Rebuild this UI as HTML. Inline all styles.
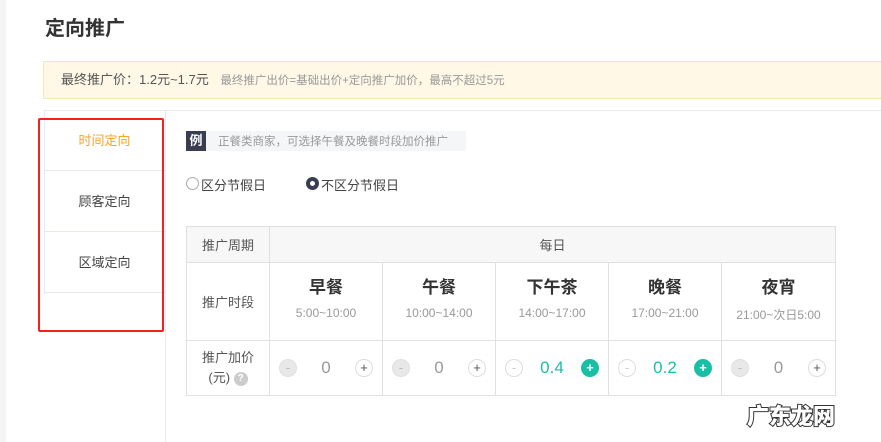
<!DOCTYPE html>
<html><head><meta charset="utf-8"><style>
*{margin:0;padding:0;box-sizing:border-box}
body{width:881px;height:442px;overflow:hidden;background:#fff;font-family:"Liberation Sans","Noto Sans CJK SC",sans-serif;position:relative;color:#333}
.abs{position:absolute}
table{border-collapse:collapse;position:absolute;left:186px;top:226px;width:650px;font-size:13px;color:#555}
td{border:1px solid #e0e0e0;text-align:center}
.btn{display:inline-block;width:18px;height:18px;border-radius:50%;font-size:13px;line-height:16px;text-align:center;vertical-align:middle}
.m{background:#e8e8e8;color:#bbb;border:1px solid #e0e0e0}
.mw{background:#fff;color:#ccc;border:1px solid #ddd}
.p{background:#fff;color:#555;border:1px solid #ddd}
.pg{background:#19bfa5;color:#fff;border:1px solid #19bfa5;font-weight:bold}
.cell{display:flex;justify-content:space-between;align-items:center;padding:0 9px}
.v{font-size:17px;color:#999}
.vg{font-size:17px;color:#19bfa5}
.tt{vertical-align:top;padding-top:10px}
.nm{font-size:17px;font-weight:bold;color:#333}
.tm{font-size:12px;color:#999;margin-top:8px}
</style></head><body>
<div class="abs" style="left:0;top:0;width:6px;height:442px;background:#f4f5f7"></div>
<div class="abs" style="left:45px;top:12px;font-size:20px;font-weight:bold;color:#333">定向推广</div>
<div class="abs" style="left:43px;top:61px;width:840px;height:38px;background:#fff8e6;border:1px solid #f9e6b4;font-size:13px;line-height:36px;padding-left:17px;color:#555">最终推广价：1.2元~1.7元 <span style="font-size:11.5px;color:#999;margin-left:8px">最终推广出价=基础出价+定向推广加价，最高不超过5元</span></div>
<div class="abs" style="left:44px;top:110px;width:837px;height:1px;background:#e8e8ee"></div>
<div class="abs" style="left:165px;top:110px;width:1px;height:332px;background:#e8e8ee"></div>
<div class="abs" style="left:44px;top:110px;width:1px;height:184px;background:#e8e8ee"></div>
<div class="abs" style="left:44px;top:110px;width:121px;height:61px;line-height:61px;text-align:center;font-size:13px;color:#f5a623;border-bottom:1px solid #e8e8ee">时间定向</div>
<div class="abs" style="left:44px;top:171px;width:121px;height:61px;line-height:61px;text-align:center;font-size:13px;color:#444;border-bottom:1px solid #e8e8ee">顾客定向</div>
<div class="abs" style="left:44px;top:232px;width:121px;height:61px;line-height:61px;text-align:center;font-size:13px;color:#444;border-bottom:1px solid #e8e8ee">区域定向</div>
<div class="abs" style="left:38px;top:118px;width:126px;height:214px;border:2px solid #f2231b;border-radius:2px"></div>
<div class="abs" style="left:186px;top:131px;width:280px;height:20px;background:#f5f6f8"></div>
<div class="abs" style="left:186px;top:131px;width:20px;height:20px;background:#3a3d4f;color:#fff;font-size:13px;font-weight:bold;line-height:20px;text-align:center">例</div>
<div class="abs" style="left:218px;top:133px;font-size:11.5px;color:#999">正餐类商家，可选择午餐及晚餐时段加价推广</div>
<div class="abs" style="left:186px;top:177px;width:13px;height:13px;border:1px solid #aaa;border-radius:50%"></div>
<div class="abs" style="left:201px;top:175px;font-size:13px;color:#444">区分节假日</div>
<div class="abs" style="left:306px;top:177px;width:13px;height:13px;border:4px solid #3a3d4f;border-radius:50%"></div>
<div class="abs" style="left:321px;top:175px;font-size:13px;color:#444">不区分节假日</div>
<table>
<tr style="height:36px;background:#f7f7f7"><td style="width:83px">推广周期</td><td colspan="5">每日</td></tr>
<tr style="height:78px"><td>推广时段</td>
<td class="tt" style="width:113px"><div class="nm">早餐</div><div class="tm">5:00~10:00</div></td>
<td class="tt" style="width:113px"><div class="nm">午餐</div><div class="tm">10:00~14:00</div></td>
<td class="tt" style="width:113px"><div class="nm">下午茶</div><div class="tm">14:00~17:00</div></td>
<td class="tt" style="width:113px"><div class="nm">晚餐</div><div class="tm">17:00~21:00</div></td>
<td class="tt"><div class="nm">夜宵</div><div class="tm">21:00~次日5:00</div></td></tr>
<tr style="height:55px"><td style="line-height:20px">推广加价<br>(元) <span class="btn" style="background:#ccc;color:#fff;font-size:10px;font-weight:bold;width:14px;height:14px;line-height:14px;border:0">?</span></td>
<td><div class="cell"><span class="btn m">-</span><span class="v">0</span><span class="btn p">+</span></div></td>
<td><div class="cell"><span class="btn m">-</span><span class="v">0</span><span class="btn p">+</span></div></td>
<td><div class="cell"><span class="btn mw">-</span><span class="vg">0.4</span><span class="btn pg">+</span></div></td>
<td><div class="cell"><span class="btn mw">-</span><span class="vg">0.2</span><span class="btn pg">+</span></div></td>
<td><div class="cell"><span class="btn m">-</span><span class="v">0</span><span class="btn p">+</span></div></td></tr>
</table>
<div class="abs" style="left:747px;top:399px;font-size:22px;font-weight:900;color:#fff;-webkit-text-stroke:2px #333;paint-order:stroke fill">广东龙网</div>
</body></html>
